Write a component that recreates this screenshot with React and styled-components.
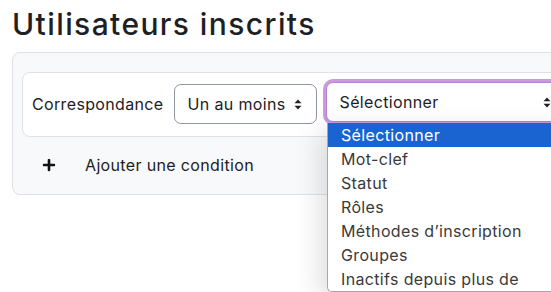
import React from "react";
import styled, { createGlobalStyle } from "styled-components";
import { FaPlus } from "react-icons/fa";

const Global = createGlobalStyle`
  html, body { margin: 0; padding: 0; background: #fff; overflow: hidden; }
  body { font-family: Inter, "Noto Sans", sans-serif; color: #1d2125; }
`;

const Page = styled.div`
  width: 551px;
  height: 292px;
  position: relative;
  overflow: hidden;
`;

const Title = styled.h2`
  margin: 6px 0 0 12px;
  font-size: 30px;
  line-height: 36px;
  font-weight: 500;
  color: #1d2125;
  letter-spacing: 1.4px;
`;

const Panel = styled.div`
  margin: 10px 0 0 12px;
  width: 600px;
  box-sizing: border-box;
  border: 1px solid #dee2e6;
  border-radius: 8px;
  background: #f8f9fa;
  padding: 19px 9px 9px 9px;
`;

const Card = styled.div`
  display: flex;
  align-items: center;
  gap: 10px;
  background: #fff;
  border: 1px solid #dee2e6;
  border-radius: 8px;
  padding: 9px 9px 10px 9px;
`;

const Label = styled.span`
  font-size: 16px;
  letter-spacing: 0.35px;
  color: #1d2125;
`;

const SelectBox = styled.div`
  position: relative;
  display: flex;
  align-items: center;
  justify-content: space-between;
  box-sizing: border-box;
  height: 40px;
  width: ${(p) => p.$width}px;
  padding: 0 14px 0 13px;
  background: #fff;
  border: 1px solid ${(p) => (p.$focus ? "#b77fcf" : "#8f959e")};
  border-radius: 7px;
  font-size: 16px;
  letter-spacing: 0.35px;
  color: #1d2125;
  box-shadow: ${(p) => (p.$focus ? "0 0 0 3px #c99bdc" : "none")};
  margin-left: ${(p) => p.$ml || 0}px;
  margin-bottom: ${(p) => p.$mb || 0}px;
`;

const Arrows = () => (
  <svg width="8" height="11" viewBox="0 0 8 11">
    <path d="M4 0.5 L7.5 4.2 L0.5 4.2 Z" fill="#1d2125" />
    <path d="M0.5 6.8 L7.5 6.8 L4 10.5 Z" fill="#1d2125" />
  </svg>
);

const AddRow = styled.div`
  display: flex;
  align-items: center;
  height: 40px;
  margin-top: 8px;
  padding-left: 20px;
  font-size: 16px;
  letter-spacing: 0.35px;
  color: #1d2125;
`;

const PlusIcon = styled.span`
  display: inline-flex;
  width: 14px;
  color: #111;
  margin-right: 29px;
`;

const Dropdown = styled.ul`
  position: absolute;
  left: 327px;
  top: 123px;
  width: 260px;
  margin: 0;
  padding: 0;
  list-style: none;
  background: #fff;
  border-left: 1px solid #a8a8a8;
  border-bottom: 1px solid #a8a8a8;
  border-radius: 0 0 0 5px;
  box-shadow: -6px 8px 28px rgba(0, 0, 0, 0.14);
`;

const Option = styled.li`
  height: 24px;
  line-height: 24px;
  padding-left: 13px;
  font-size: 16px;
  letter-spacing: 0.35px;
  color: ${(p) => (p.$active ? "#fff" : "#3a3a3a")};
  background: ${(p) => (p.$active ? "#1a64d2" : "transparent")};
  white-space: nowrap;
  box-sizing: border-box;
`;

const options = [
  "Sélectionner",
  "Mot-clef",
  "Statut",
  "Rôles",
  "Méthodes d’inscription",
  "Groupes",
  "Inactifs depuis plus de",
];

export default function App() {
  return (
    <Page>
      <Global />
      <Title>Utilisateurs inscrits</Title>
      <Panel>
        <Card>
          <Label>Correspondance</Label>
          <SelectBox $width={143}>
            <span>Un au moins</span>
            <Arrows />
          </SelectBox>
          <SelectBox $width={240} $focus $ml={-1} $mb={4}>
            <span>Sélectionner</span>
            <Arrows />
          </SelectBox>
        </Card>
        <AddRow>
          <PlusIcon>
            <FaPlus size={14} />
          </PlusIcon>
          Ajouter une condition
        </AddRow>
      </Panel>
      <Dropdown>
        {options.map((o, i) => (
          <Option key={o} $active={i === 0}>
            {o}
          </Option>
        ))}
      </Dropdown>
    </Page>
  );
}
